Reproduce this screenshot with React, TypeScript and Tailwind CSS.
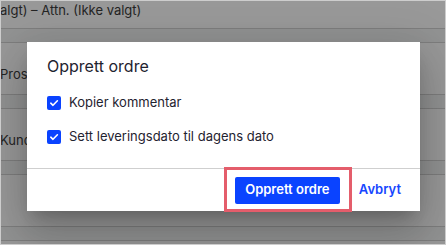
import React from 'react';

const rows = ['Prosjekt', 'Kunde', '', ''];

const Checkbox: React.FC = () => (
    <span className="flex h-[14px] w-[14px] items-center justify-center rounded-[2px] bg-[#0a43ff]">
        <svg width="10" height="10" viewBox="0 0 10 10" fill="none">
            <path d="M1.8 5.2 4 7.3 8.4 2.8" stroke="white" strokeWidth="1.6" strokeLinecap="round" strokeLinejoin="round" />
        </svg>
    </span>
);

const App: React.FC = () => {
    const options = ['Kopier kommentar', 'Sett leveringsdato til dagens dato'];

    return (
        <div className="relative h-[245px] w-[446px] overflow-hidden border border-[#cdcdcd] bg-white font-['Inter',sans-serif]">
            {/* Page behind the dialog */}
            <div className="flex flex-col text-[13px] text-[#3d3d3d]">
                <div className="-ml-[1px] h-[27px] whitespace-nowrap pt-[1px] leading-[16px]">
                    algt) – Attn. (Ikke valgt)
                </div>
                {rows.map((label, i) => (
                    <div key={i} className="flex flex-col">
                        <div className="h-[14px] border-t border-[#d2d2d2] bg-[#f4f5f6]" />
                        <div className="-ml-[1px] h-[52px] whitespace-nowrap border-t border-[#d2d2d2] pt-[23px] leading-[16px]">
                            {label}
                        </div>
                    </div>
                ))}
            </div>

            {/* Backdrop */}
            <div className="absolute inset-0 bg-black/40" />

            {/* Dialog */}
            <div className="absolute left-[26px] top-[41px] flex h-[169px] w-[393px] flex-col bg-white shadow-[0_11px_15px_-7px_rgba(0,0,0,0.2),0_24px_38px_3px_rgba(0,0,0,0.14),0_9px_46px_8px_rgba(0,0,0,0.12)]">
                <div className="flex flex-col px-[20px] pb-[14px] pt-[12px]">
                    <h2 className="text-[16px] leading-[24px] text-[#1f2330]">Opprett ordre</h2>
                    <div className="mt-[8px] flex flex-col">
                        {options.map((o) => (
                            <label key={o} className="flex h-[34px] items-center gap-[8px] text-[13px] text-[#1f2330]">
                                <Checkbox />
                                <span>{o}</span>
                            </label>
                        ))}
                    </div>
                </div>
                <div className="flex h-[43px] items-center justify-end gap-[19px] border-t border-[#cfcfcf] pr-[19px]">
                    <div className="relative">
                        <button className="flex h-[27px] w-[105px] items-center justify-center rounded-[2px] bg-[#0a43ff] text-[13px] font-semibold text-white">
                            Opprett ordre
                        </button>
                        {/* Highlight annotation */}
                        <div className="pointer-events-none absolute -bottom-[8px] -left-[11px] -right-[12px] -top-[10px] border-[3px] border-[#e45d6b]" />
                    </div>
                    <button className="text-[13px] font-semibold text-[#1747ff]">Avbryt</button>
                </div>
            </div>
        </div>
    );
};

export default App;
